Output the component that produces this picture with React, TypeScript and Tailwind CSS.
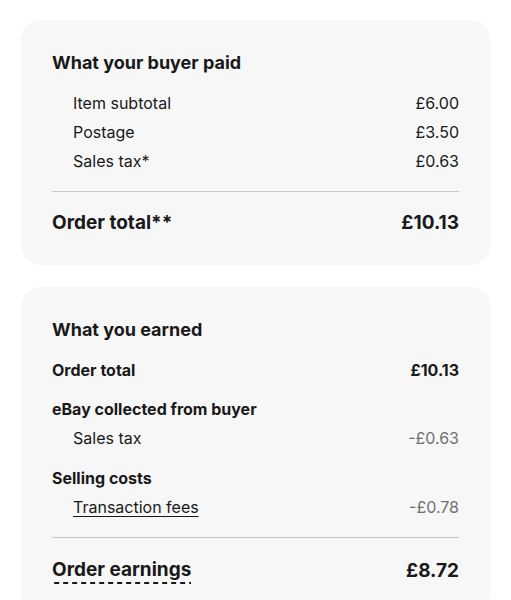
import React from 'react';

interface LineProps {
  label: React.ReactNode;
  value: string;
  indent?: boolean;
  bold?: boolean;
  muted?: boolean;
  className?: string;
}

function Line({ label, value, indent, bold, muted, className = '' }: LineProps) {
  return (
    <div className={`flex h-[29px] items-center justify-between text-[16px] ${className}`}>
      <span className={`${indent ? 'pl-[21px]' : ''} ${bold ? 'font-bold' : ''}`}>{label}</span>
      {value && (
        <span className={`${bold ? 'font-bold' : ''} ${muted ? 'text-[#707070]' : ''}`}>{value}</span>
      )}
    </div>
  );
}

export default function App() {
  return (
    <div className="min-h-screen bg-white px-[21px] pt-[20px] text-[#191919] font-['Inter',sans-serif]">
      {/* Buyer paid */}
      <section className="w-[469px] rounded-[20px] bg-[#f7f7f7] px-[31px] pt-[31px] pb-[28px]">
        <h2 className="h-[24px] text-[18px] leading-[24px] font-bold">What your buyer paid</h2>
        <div className="mt-[13px]">
          <Line label="Item subtotal" value="£6.00" indent />
          <Line label="Postage" value="£3.50" indent />
          <Line label="Sales tax*" value="£0.63" indent />
        </div>
        <div className="mt-[16px] h-px bg-[#c7c7c7]" />
        <div className="mt-[17px] flex h-[28px] items-center justify-between text-[19px] font-bold">
          <span>Order total**</span>
          <span>£10.13</span>
        </div>
      </section>

      {/* Earnings */}
      <section className="mt-[22px] w-[469px] rounded-[20px] bg-[#f7f7f7] px-[31px] pt-[31px] pb-[28px]">
        <h2 className="h-[24px] text-[18px] leading-[24px] font-bold">What you earned</h2>
        <Line label="Order total" value="£10.13" bold className="mt-[13px]" />
        <Line label="eBay collected from buyer" value="" bold className="mt-[10px]" />
        <Line label="Sales tax" value="-£0.63" indent muted />
        <Line label="Selling costs" value="" bold className="mt-[11px]" />
        <Line
          label={<a href="#fees" className="underline underline-offset-[3px]">Transaction fees</a>}
          value="-£0.78"
          indent
          muted
        />
        <div className="mt-[16px] h-px bg-[#c7c7c7]" />
        <div className="mt-[19px] flex h-[28px] items-center justify-between text-[19px] font-bold">
          <span className="pb-[2px] bg-[linear-gradient(to_right,#191919_55%,transparent_55%)] bg-[length:9px_2px] bg-bottom bg-repeat-x leading-[24px]">
            Order earnings
          </span>
          <span>£8.72</span>
        </div>
      </section>
    </div>
  );
}
